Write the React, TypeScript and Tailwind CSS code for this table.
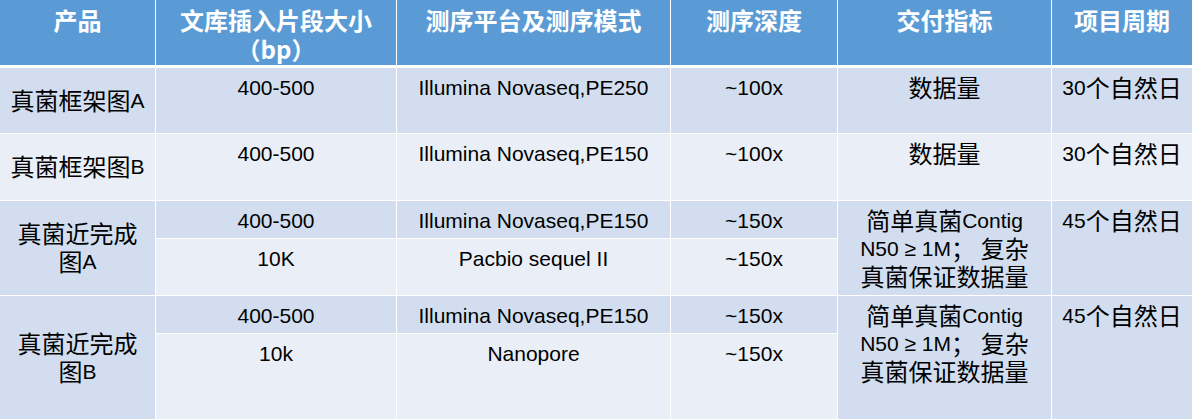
import React from "react";

const LATIN = /^[\u0020-\u024F\u2265]/;

function T({ s }: { s: string }) {
  const parts = s.split(/([\u0020-\u024F\u2265]+)/).filter((p) => p.length > 0);
  return (
    <>
      {parts.map((p, i) =>
        LATIN.test(p) ? (
          <span key={i}>{p}</span>
        ) : (
          <span
            key={i}
            className="align-[-2px] font-['Noto_Sans_CJK_SC',sans-serif] text-[24px] leading-none"
          >
            {p}
          </span>
        )
      )}
    </>
  );
}

const DARK = "bg-[#d2deef]";
const LIGHT = "bg-[#eaeff7]";

function Cell({
  lines,
  className,
  middle,
}: {
  lines: string[];
  className: string;
  middle?: boolean;
}) {
  return (
    <div
      className={
        "flex flex-col items-center text-center font-['Liberation_Sans',sans-serif] text-[21px] leading-[28px] text-black " +
        (middle ? "justify-center " : "justify-start pt-[6px] ") +
        className
      }
    >
      {lines.map((l, i) => (
        <div key={i} className="h-[28px] whitespace-nowrap">
          <T s={l} />
        </div>
      ))}
    </div>
  );
}

function H({ lines, extra }: { lines: string[]; extra?: string }) {
  return (
    <div className="flex flex-col items-center bg-[#5b9bd5] pt-[7px] text-center font-['Liberation_Sans',sans-serif] text-[21px] font-bold leading-[28px] text-white">
      {lines.map((l, i) => (
        <div key={i} className="h-[28px] whitespace-nowrap">
          <T s={l} />
        </div>
      ))}
      {extra ? (
        <div className="h-[28px] whitespace-nowrap font-['Noto_Sans_CJK_SC',sans-serif] text-[24px] leading-[28px]">
          {extra}
        </div>
      ) : null}
    </div>
  );
}

export default function App() {
  const cols = "grid grid-cols-[155px_240px_273px_166px_213px_140px] gap-x-px";
  const merged = ["简单真菌Contig", "N50 ≥ 1M； 复杂", "真菌保证数据量"];
  return (
    <div className="h-[419px] w-[1192px] overflow-hidden bg-white">
      <div className={cols + " h-[65px]"}>
        <H lines={["产品"]} />
        <H lines={["文库插入片段大小"]} extra="（bp）" />
        <H lines={["测序平台及测序模式"]} />
        <H lines={["测序深度"]} />
        <H lines={["交付指标"]} />
        <H lines={["项目周期"]} />
      </div>
      <div
        className={
          cols + " mt-[3px] grid-rows-[65px_66px_37px_56px_37px_85px] gap-y-px"
        }
      >
        {/* Row 1 */}
        <Cell middle lines={["真菌框架图A"]} className={DARK + " col-start-1 row-start-1"} />
        <Cell lines={["400-500"]} className={DARK + " col-start-2 row-start-1"} />
        <Cell lines={["Illumina Novaseq,PE250"]} className={DARK + " col-start-3 row-start-1"} />
        <Cell lines={["~100x"]} className={DARK + " col-start-4 row-start-1"} />
        <Cell lines={["数据量"]} className={DARK + " col-start-5 row-start-1"} />
        <Cell lines={["30个自然日"]} className={DARK + " col-start-6 row-start-1"} />

        {/* Row 2 */}
        <Cell middle lines={["真菌框架图B"]} className={LIGHT + " col-start-1 row-start-2"} />
        <Cell lines={["400-500"]} className={LIGHT + " col-start-2 row-start-2"} />
        <Cell lines={["Illumina Novaseq,PE150"]} className={LIGHT + " col-start-3 row-start-2"} />
        <Cell lines={["~100x"]} className={LIGHT + " col-start-4 row-start-2"} />
        <Cell lines={["数据量"]} className={LIGHT + " col-start-5 row-start-2"} />
        <Cell lines={["30个自然日"]} className={LIGHT + " col-start-6 row-start-2"} />

        {/* Row 3 */}
        <Cell middle lines={["真菌近完成", "图A"]} className={DARK + " col-start-1 row-start-3 row-span-2"} />
        <Cell lines={["400-500"]} className={DARK + " col-start-2 row-start-3"} />
        <Cell lines={["Illumina Novaseq,PE150"]} className={DARK + " col-start-3 row-start-3"} />
        <Cell lines={["~150x"]} className={DARK + " col-start-4 row-start-3"} />
        <Cell lines={merged} className={DARK + " col-start-5 row-start-3 row-span-2"} />
        <Cell lines={["45个自然日"]} className={DARK + " col-start-6 row-start-3 row-span-2"} />
        <Cell lines={["10K"]} className={LIGHT + " col-start-2 row-start-4"} />
        <Cell lines={["Pacbio sequel II"]} className={LIGHT + " col-start-3 row-start-4"} />
        <Cell lines={["~150x"]} className={LIGHT + " col-start-4 row-start-4"} />

        {/* Row 4 */}
        <Cell middle lines={["真菌近完成", "图B"]} className={DARK + " col-start-1 row-start-5 row-span-2"} />
        <Cell lines={["400-500"]} className={DARK + " col-start-2 row-start-5"} />
        <Cell lines={["Illumina Novaseq,PE150"]} className={DARK + " col-start-3 row-start-5"} />
        <Cell lines={["~150x"]} className={DARK + " col-start-4 row-start-5"} />
        <Cell lines={merged} className={DARK + " col-start-5 row-start-5 row-span-2"} />
        <Cell lines={["45个自然日"]} className={DARK + " col-start-6 row-start-5 row-span-2"} />
        <Cell lines={["10k"]} className={LIGHT + " col-start-2 row-start-6"} />
        <Cell lines={["Nanopore"]} className={LIGHT + " col-start-3 row-start-6"} />
        <Cell lines={["~150x"]} className={LIGHT + " col-start-4 row-start-6"} />
      </div>
    </div>
  );
}
